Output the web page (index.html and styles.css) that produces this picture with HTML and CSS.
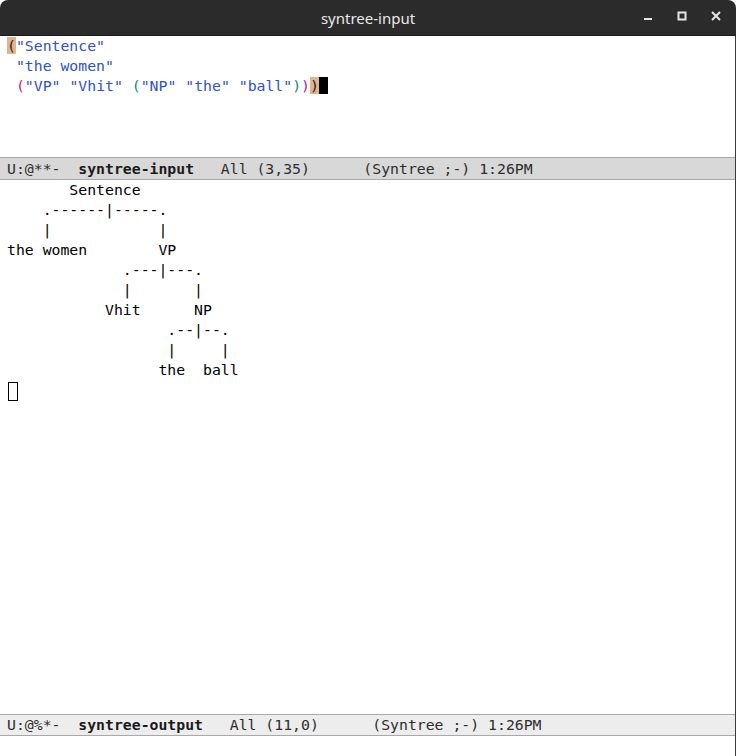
FILE: index.html
```html
<!DOCTYPE html>
<html>
<head>
<meta charset="utf-8">
<link rel="stylesheet" href="styles.css">
</head>
<body>
<div class="frame">
  <header class="titlebar">
    <span class="title">syntree-input</span>
    <div class="controls">
      <svg class="btn" width="12" height="12" viewBox="0 0 12 12"><rect x="2" y="8" width="8" height="2" fill="#e6e6e6"/></svg>
      <svg class="btn" width="12" height="12" viewBox="0 0 12 12"><rect x="2.5" y="2.5" width="7" height="7" fill="none" stroke="#e6e6e6" stroke-width="2"/></svg>
      <svg class="btn" width="12" height="12" viewBox="0 0 12 12"><path d="M2 2 L10 10 M10 2 L2 10" stroke="#e6e6e6" stroke-width="2"/></svg>
    </div>
  </header>
  <div class="emacs">
    <section class="window win-top">
<pre class="buf"><span class="hl">(</span><span class="str">"Sentence"</span>
 <span class="str">"the women"</span>
 <span class="d2">(</span><span class="str">"VP"</span> <span class="str">"Vhit"</span> <span class="d3">(</span><span class="str">"NP"</span> <span class="str">"the"</span> <span class="str">"ball"</span><span class="d3">)</span><span class="d2">)</span><span class="hl">)</span><span class="cursor"> </span></pre>
    </section>
    <div class="modeline ml-top"><pre class="mltext">U:@**-  <b>syntree-input</b>   All (3,35)      (Syntree ;-) 1:26PM</pre></div>
    <section class="window win-bottom">
<pre class="buf">       Sentence
    .------|-----.
    |            |
the women        VP
             .---|---.
             |       |
           Vhit      NP
                  .--|--.
                  |     |
                 the  ball
<span class="hollow"> </span></pre>
    </section>
    <div class="modeline ml-bottom"><pre class="mltext">U:@%*-  <b>syntree-output</b>   All (11,0)      (Syntree ;-) 1:26PM</pre></div>
    <div class="minibuffer"></div>
  </div>
</div>
</body>
</html>
```

FILE: styles.css
```css
html, body {
  margin: 0;
  padding: 0;
  background: #ffffff;
}

.frame {
  width: 736px;
  height: 756px;
  display: flex;
  flex-direction: column;
  overflow: hidden;
}

.titlebar {
  height: 35px;
  flex: none;
  background: #2b2b2b;
  border-bottom: 1px solid #1a1a1a;
  border-radius: 8px 8px 0 0;
  display: flex;
  align-items: center;
  justify-content: center;
  position: relative;
}

.title {
  font-family: "Noto Sans", "DejaVu Sans", sans-serif;
  font-size: 15px;
  color: #e8e8e8;
  margin-left: 0;
}

.controls {
  position: absolute;
  right: 14px;
  top: 10px;
  display: flex;
  gap: 22px;
}

.btn {
  display: block;
}

.emacs {
  flex: 1;
  display: flex;
  flex-direction: column;
  border-right: 1px solid #3a3a3a;
}

.window {
  overflow: hidden;
  background: #ffffff;
}

.win-top {
  height: 121px;
  flex: none;
}

.win-bottom {
  flex: 1;
}

.buf, .mltext {
  margin: 0;
  padding-left: 7px;
  font-family: "DejaVu Sans Mono", monospace;
  font-size: 14.8px;
  line-height: 20px;
  color: #000000;
}

.str { color: #2f52c8; }
.d2 { color: #c0168f; }
.d3 { color: #157f8e; }
.hl { background: #e2b38c; color: #222; }

.cursor {
  background: #000000;
}

.hollow {
  display: inline-block;
  width: 8px;
  height: 17px;
  border: 1px solid #000;
  vertical-align: -3px;
  margin-left: 1px;
}

.modeline {
  flex: none;
  border-top: 1px solid #a8a8a8;
  border-bottom: 1px solid #a8a8a8;
  display: flex;
  align-items: center;
}

.ml-top {
  height: 21px;
  background: #d8d8d8;
}

.ml-bottom {
  height: 20px;
  background: #ededed;
}

.mltext {
  color: #2e2e2e;
}

.mltext b {
  font-weight: bold;
  color: #1a1a1a;
}

.minibuffer {
  height: 20px;
  flex: none;
  background: #ffffff;
}
```
